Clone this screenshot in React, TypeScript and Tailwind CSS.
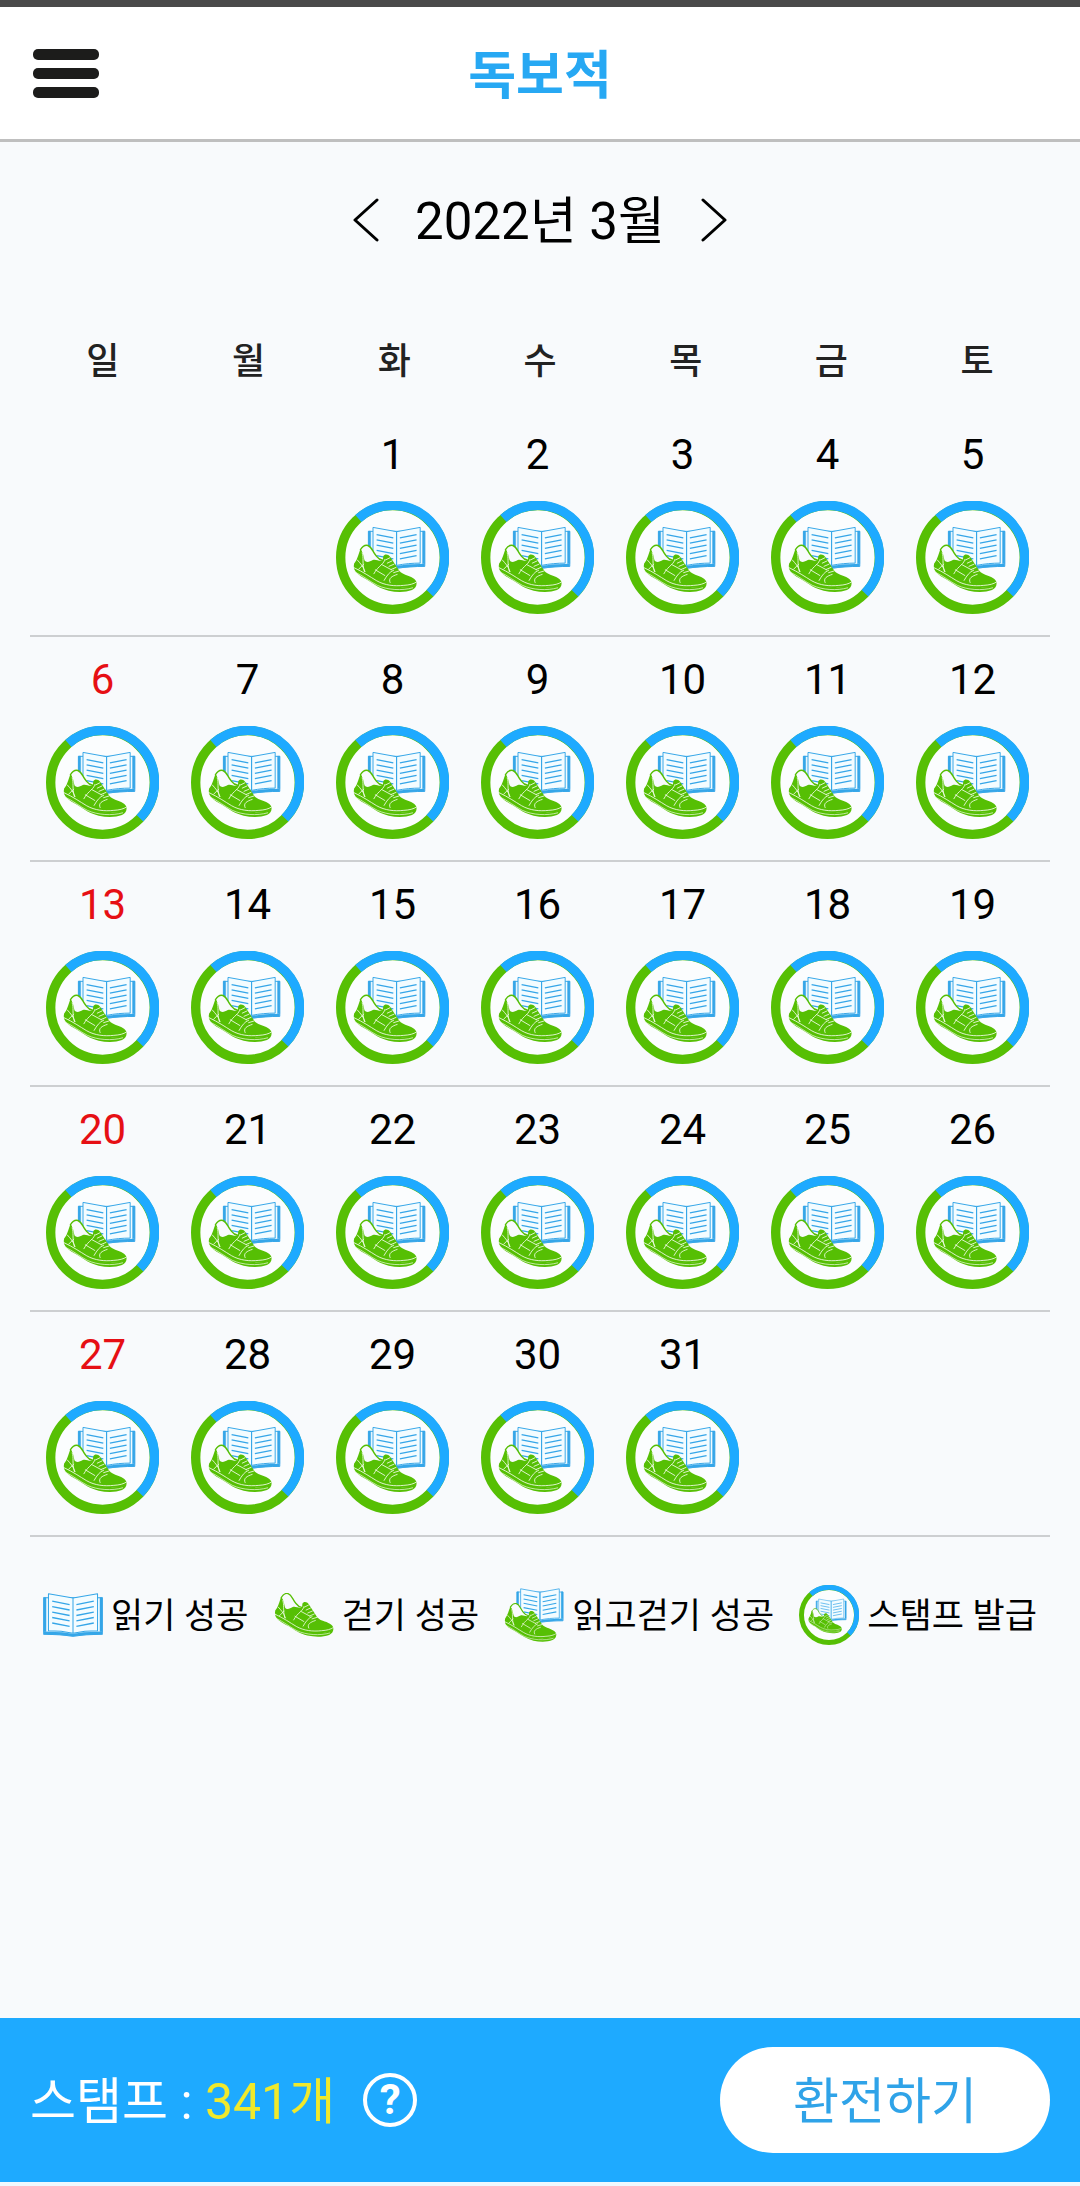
import type { ReactNode } from 'react'

const WEEKDAYS = ['일', '월', '화', '수', '목', '금', '토']

// March 2022 starts on a Tuesday
const FIRST_WEEKDAY = 2
const DAYS_IN_MONTH = 31

const WEEKS = Array.from({ length: 5 }, (_, week) =>
  WEEKDAYS.map((_, weekday) => {
    const day = week * 7 + weekday - FIRST_WEEKDAY + 1
    return day >= 1 && day <= DAYS_IN_MONTH ? day : null
  }),
)

const BLUE = '#1eaaff'
const GREEN = '#56bf04'

function BookShape() {
  return (
    <g stroke="#35a6e8" fill="none" strokeLinejoin="round">
      <path d="M2 14H174V121C145 121 112 123 88 127C64 123 31 121 2 121Z" fill="#f3fcff" strokeWidth="3" />
      <path d="M2 13H9V113H2ZM167 13H174V113H167ZM3 114C35 113 65 116 88 120C111 116 141 113 173 114V121C141 121 111 123 88 127C65 123 35 121 3 121Z" fill="#35a6e8" strokeWidth="1" />
      <path d="M16 2L88 15V118C64 113 40 111 16 111ZM160 2L88 15V118C112 113 136 111 160 111Z" fill="#f3fcff" strokeWidth="3" />
      {[0, 16, 32, 48, 64].map(y => (
        <path key={y} d={`M27 ${24 + y}L78 ${34 + y}M98 ${34 + y}L149 ${24 + y}`} strokeWidth="4" />
      ))}
    </g>
  )
}

function ShoeShape() {
  return (
    <g fill="none" strokeLinecap="round" strokeLinejoin="round">
      <path d="M22 14C28 4 36 0 43 2C55 6 56 20 67 32C73 40 79 43 85 44L80 54L32 52Z" fill="#f8fafc" stroke={GREEN} strokeWidth="4" />
      <path d="M22 13C16 25 15 39 4 53C2 62 3 67 8 71C30 82 48 95 68 108C90 121 116 124 142 122C164 121 181 116 181 108C181 97 164 90 149 85C139 81 132 76 127 66L106 34C101 26 90 25 87 32C85 38 88 42 83 45C73 47 66 40 57 43C49 47 43 51 36 47C30 42 34 27 22 13Z" fill={GREEN} />
      <path d="M3 66C29 78 48 92 68 105C91 119 118 123 145 121C161 120 175 116 181 109C181 118 177 124 168 128C150 135 125 135 102 130C78 124 62 113 44 101C26 91 8 83 3 66Z" fill={GREEN} />
      <path d="M4 65C30 77 48 90 68 102C91 115 118 118 145 115C161 114 173 111 180 106" stroke="#effbe5" strokeWidth="2.5" />
      <path d="M6 77C30 88 50 105 70 115C98 128 140 131 170 122" stroke="#effbe5" strokeWidth="2" />
      <path d="M27 23C32 37 26 50 33 76M13 43C22 53 29 60 35 76M17 69L31 55M60 82C66 71 73 64 82 56C87 51 90 47 91 42M64 71L91 87M82 56L110 71M89 101C97 87 104 77 116 72M106 107C100 95 111 89 126 84" stroke="#effbe5" strokeWidth="2.5" />
      <path d="M93 43L105 37M98 52L111 46M103 61L117 55M109 70L123 64M116 79L132 74" stroke="#effbe5" strokeWidth="2.5" />
    </g>
  )
}

function BookAndShoe() {
  return (
    <>
      <g transform="translate(95 77) scale(.98)"><BookShape /></g>
      <g transform="translate(50 131) scale(1.055)"><ShoeShape /></g>
    </>
  )
}

function Stamp({ className }: { className: string }) {
  return (
    <svg viewBox="0 0 338 338" className={className} aria-hidden="true">
      <g fill="none" strokeWidth="28">
        <circle cx="169" cy="169" r="155" stroke={GREEN} fill="#fbfdfe" />
        <path d="M67 52A155 155 0 0 1 281 276" stroke={BLUE} />
      </g>
      <BookAndShoe />
    </svg>
  )
}

function LegendItem({ label, children }: { label: string; children: ReactNode }) {
  return (
    <li className="flex items-center gap-2">
      {children}
      <span className="pt-1 text-[35px] leading-[48px] whitespace-nowrap">{label}</span>
    </li>
  )
}

export default function App() {
  return (
    <div className="flex min-h-screen flex-col border-t-[7px] border-[#4a4a4a] bg-[#f8fafc] font-[Roboto,'Noto_Sans_CJK_KR',sans-serif] text-black">
      <header className="grid h-[135px] grid-cols-[1fr_auto_1fr] items-center border-b-[3px] border-[#bfbfbf] bg-white px-[33px]">
        <button aria-label="메뉴" className="flex w-[66px] flex-col gap-[8px]">
          <span className="h-[11px] w-full rounded-[5px] bg-[#1c1c1b]" />
          <span className="h-[11px] w-full rounded-[5px] bg-[#1c1c1b]" />
          <span className="h-[11px] w-full rounded-[5px] bg-[#1c1c1b]" />
        </button>
        <h1 className="pt-2 text-[52px] leading-[72px] font-bold text-[#27a8f3]">독보적</h1>
      </header>

      <main className="px-[30px]">
        <div className="flex items-center justify-center gap-7 pt-[40px]">
          <button aria-label="이전 달" className="px-2">
            <svg viewBox="0 0 26 44" className="h-[44px] w-[26px]" fill="none" stroke="currentColor" strokeWidth="3" strokeLinecap="round" strokeLinejoin="round">
              <path d="M24 2L2 22L24 42" />
            </svg>
          </button>
          <h2 className="pt-1 text-[51px] leading-[72px]">2022년 3월</h2>
          <button aria-label="다음 달" className="px-2">
            <svg viewBox="0 0 26 44" className="h-[44px] w-[26px]" fill="none" stroke="currentColor" strokeWidth="3" strokeLinecap="round" strokeLinejoin="round">
              <path d="M2 2L24 22L2 42" />
            </svg>
          </button>
        </div>

        <table className="mt-[76px] block">
          <thead className="block">
            <tr className="grid grid-cols-7">
              {WEEKDAYS.map(name => (
                <th key={name} scope="col" className="text-center text-[36px] leading-[56px] font-medium text-[#222]">{name}</th>
              ))}
            </tr>
          </thead>
          <tbody className="mt-[22px] block">
            {WEEKS.map((days, week) => (
              <tr key={week} className="grid grid-cols-7 border-b-2 border-[#cdcfd1] pt-[15px] pr-[5px] pb-[21px]">
                {days.map((day, weekday) => (
                  <td key={weekday} className="flex flex-col items-center gap-[18px]">
                    {day && (
                      <>
                        <span className={`text-[42px] leading-[56px] ${weekday === 0 ? 'text-[#e60f14]' : ''}`}>{day}</span>
                        <Stamp className="size-[113px]" />
                      </>
                    )}
                  </td>
                ))}
              </tr>
            ))}
          </tbody>
        </table>

        <ul className="mt-12 flex items-center justify-between px-[13px]">
          <LegendItem label="읽기 성공">
            <svg viewBox="0 0 176 129" className="w-[60px]" aria-hidden="true"><BookShape /></svg>
          </LegendItem>
          <LegendItem label="걷기 성공">
            <svg viewBox="0 0 183 136" className="w-[60px]" aria-hidden="true"><ShoeShape /></svg>
          </LegendItem>
          <LegendItem label="읽고걷기 성공">
            <svg viewBox="50 76 219 200" className="w-[60px]" aria-hidden="true"><BookAndShoe /></svg>
          </LegendItem>
          <LegendItem label="스탬프 발급">
            <Stamp className="size-[60px]" />
          </LegendItem>
        </ul>
      </main>

      <footer className="mt-auto flex h-[168px] items-center justify-between border-b-4 border-[#f0f9fe] bg-[#1eaaff] px-[30px]">
        <div className="flex items-center gap-7">
          <p className="pt-1 text-[50px] leading-[72px] text-white">
            스탬프 : <span className="text-[#f0e92c]">341개</span>
          </p>
          <button aria-label="스탬프 도움말" className="size-[54px] rounded-full border-4 border-white text-[42px] leading-[46px] font-bold text-white">?</button>
        </div>
        <button className="h-[106px] w-[330px] rounded-full bg-white pt-1 text-[50px] leading-[72px] text-[#2fa3e8]">환전하기</button>
      </footer>
    </div>
  )
}
